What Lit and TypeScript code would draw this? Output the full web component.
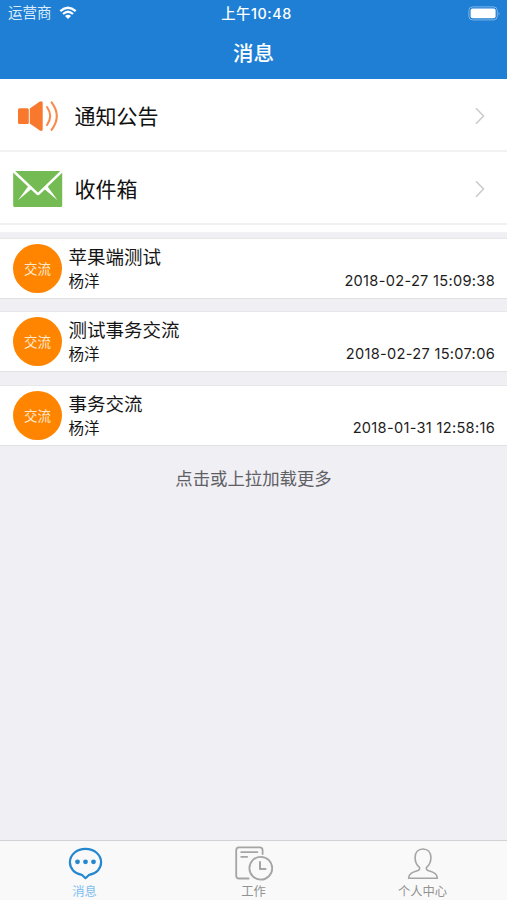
import { LitElement, html, css, svg } from "lit";
import { customElement, property } from "lit/decorators.js";

interface Topic {
  title: string;
  author: string;
  time: string;
}

const TOPICS: Topic[] = [
  { title: "苹果端测试", author: "杨洋", time: "2018-02-27 15:09:38" },
  { title: "测试事务交流", author: "杨洋", time: "2018-02-27 15:07:06" },
  { title: "事务交流", author: "杨洋", time: "2018-01-31 12:58:16" },
];

const speakerIcon = html`<svg width="50" height="50" viewBox="0 0 50 50">
  <g fill="#f8782e">
    <rect x="5" y="17.3" width="10.8" height="15.6" rx="1.5" />
    <path d="M16.8 17.6 26.5 10.8Q29.7 9 29.7 12V38Q29.7 41 26.5 39.2L16.8 32.6Z" />
  </g>
  <g fill="none" stroke="#f88a4c" stroke-width="2.1" stroke-linecap="round">
    <path d="M34 16Q40.4 25 34 34" />
    <path d="M38.6 11.4Q49 25 38.6 38.8" />
  </g>
</svg>`;

const mailIcon = html`<svg width="50" height="50" viewBox="0 0 50 50">
  <rect x="0.2" y="7" width="49" height="36" rx="1.5" fill="#73bb52" />
  <path d="M0 6.8 24 29.4Q25 30.3 26 29.4L49.5 6.8" fill="none" stroke="#fff" stroke-width="2.6" />
  <path d="M15.8 21.4 19 24.4 5 36.2Z M33.9 21.4 30.7 24.4 44.6 36.2Z" fill="#fff" />
</svg>`;

const wifiIcon = html`<svg width="18" height="14" viewBox="0 0 18 14">
  <g fill="none" stroke="#fff" stroke-width="2.3">
    <path d="M1.3 5.1Q9 -1.7 16.7 5.1" />
    <path d="M4 8Q9 3.6 14 8" />
  </g>
  <path d="M6 10.1Q9 7.5 12 10.1L9 13Z" fill="#fff" />
</svg>`;

const batteryIcon = html`<svg width="33" height="15" viewBox="0 0 33 15">
  <rect x="0.9" y="0.9" width="28.4" height="13" rx="3.6" fill="none" stroke="#7fb5e6" stroke-width="1" />
  <rect x="2.6" y="2.6" width="25" height="9.6" rx="2" fill="#fff" />
  <path d="M30.6 5.4Q32.4 7.4 30.6 9.4Z" fill="#7fb5e6" />
</svg>`;

const TAB_ICONS: Record<string, unknown> = {
  message: svg`
    <g fill="none" stroke="#2487cf" stroke-width="2.2" stroke-linejoin="round">
      <path d="M20.5 35.2 16.8 31.8C9.5 30.6 4.9 25.4 4.9 19.3 4.9 11.8 11.7 5.8 20.5 5.8S36.1 11.8 36.1 19.3C36.1 25.4 31.5 30.6 24.2 31.8Z" />
    </g>
    <g fill="#2487cf"><circle cx="12.5" cy="18.8" r="2.4" /><circle cx="20.5" cy="18.8" r="2.4" /><circle cx="28.5" cy="18.8" r="2.4" /></g>`,
  work: svg`
    <g fill="none" stroke="#a5a5a5" stroke-width="1.8" stroke-linecap="round" stroke-linejoin="round">
      <path d="M14.6 35.5H5Q2.2 35.5 2.2 32.7V7.2Q2.2 4.3 5 4.3H25.8Q28.6 4.3 28.6 7.2V11" />
      <path d="M7.2 9.2H23.4M7.2 13.8H13.2" />
      <circle cx="26.8" cy="25.2" r="11.4" />
      <path d="M26 19V26H31.5" stroke-width="2" />
    </g>`,
  person: svg`
    <path fill="none" stroke="#a5a5a5" stroke-width="1.6" stroke-linejoin="round"
      d="M20 6C15.2 6 12.1 9.4 12.1 14.6 12.1 19 13.7 22.2 16.2 24.1 17.2 25.3 16.6 26.9 15 27.5 9.8 29.2 5.8 30.2 5.6 35.2H34.4C34.2 30.2 30.2 29.2 25 27.5 23.4 26.9 22.8 25.3 23.8 24.1 26.3 22.2 27.9 19 27.9 14.6 27.9 9.4 24.8 6 20 6Z" />`,
};

@customElement("menu-row")
class MenuRow extends LitElement {
  @property() label = "";
  @property({ attribute: false }) icon: unknown;

  static styles = css`
    :host {
      display: flex;
      align-items: center;
      box-sizing: border-box;
      height: 73px;
      padding: 2px 21px 0 13px;
      border-bottom: 2px solid #f1f1f2;
      background: #fff;
    }
    .icon { display: flex; width: 50px; }
    .label { flex: 1; margin-left: 11.5px; padding-top: 3px; font-size: 21px; line-height: 30px; color: #111; }
  `;

  render() {
    return html`<span class="icon">${this.icon}</span>
      <span class="label">${this.label}</span>
      <svg width="12" height="20" viewBox="0 0 12 20">
        <path d="M2 2.2 9.5 10 2 17.8" fill="none" stroke="#cbcbcd" stroke-width="1.6" />
      </svg>`;
  }
}

@customElement("topic-card")
class TopicCard extends LitElement {
  @property({ attribute: false }) topic!: Topic;

  static styles = css`
    :host {
      display: flex;
      align-items: center;
      box-sizing: border-box;
      height: 61px;
      padding: 0 12px 0 13px;
      background: #fff;
      border-top: 1px solid #e7e7ea;
      border-bottom: 1px solid #e1e1e4;
    }
    .badge {
      display: flex;
      align-items: center;
      justify-content: center;
      box-sizing: border-box;
      width: 49px;
      height: 49px;
      padding-bottom: 1px;
      border-radius: 50%;
      background: #ff8400;
      color: #ffe9cf;
      font-size: 13.5px;
    }
    .body { flex: 1; margin-left: 6.5px; padding-top: 1px; color: #151515; }
    .title { font-size: 18.5px; line-height: 25px; }
    .meta { display: flex; justify-content: space-between; font-size: 15.5px; line-height: 23px; }
    .time { font-family: Inter, "Liberation Sans", sans-serif; font-size: 14.6px; letter-spacing: 0.3px; color: #1c1c1c; }
  `;

  render() {
    return html`<div class="badge">交流</div>
      <div class="body">
        <div class="title">${this.topic.title}</div>
        <div class="meta"><span>${this.topic.author}</span><span class="time">${this.topic.time}</span></div>
      </div>`;
  }
}

@customElement("tab-item")
class TabItem extends LitElement {
  @property() label = "";
  @property() icon = "message";
  @property({ type: Boolean, reflect: true }) active = false;

  static styles = css`
    :host {
      flex: 1;
      display: flex;
      flex-direction: column;
      align-items: center;
      padding-top: 2px;
      color: #929292;
      font-size: 12.3px;
      line-height: 17px;
    }
    :host([active]) { color: #80bdf0; }
    svg { flex: none; }
  `;

  render() {
    return html`<svg width="40" height="40" viewBox="0 0 40 40">${TAB_ICONS[this.icon]}</svg>
      <span>${this.label}</span>`;
  }
}

@customElement("app-root")
class AppRoot extends LitElement {
  static styles = css`
    :host {
      display: flex;
      flex-direction: column;
      height: 100vh;
      overflow: hidden;
      background: #efeff4;
      font-family: Inter, "Noto Sans CJK SC", sans-serif;
    }
    header { height: 79px; background: #1e7fd5; color: #fff; }
    .status {
      display: grid;
      grid-template-columns: 1fr auto 1fr;
      align-items: center;
      height: 26px;
      padding: 0 6px 0 8px;
      font-size: 14.5px;
    }
    .carrier { display: flex; align-items: center; gap: 7px; line-height: 20px; color: #dcecfa; }
    .clock { padding: 1px 0 0 4px; font-weight: 500; font-size: 14.3px; line-height: 18px; letter-spacing: 0.6px; }
    .battery { display: flex; justify-content: flex-end; }
    h1 { margin: 0; font-size: 20.5px; font-weight: 500; line-height: 55px; text-align: center; }
    .menu { height: 154px; background: #fff; border-bottom: 1px solid #f1f1f3; box-sizing: border-box; }
    .topics { display: flex; flex-direction: column; gap: 12.4px; padding-top: 5px; }
    .more { margin-top: 20.5px; text-align: center; font-size: 17.4px; line-height: 26px; color: #606064; }
    nav {
      display: flex;
      height: 60px;
      box-sizing: border-box;
      margin-top: auto;
      border-top: 1px solid #d2d2d6;
      background: #f9f9f9;
    }
  `;

  render() {
    return html`
      <header>
        <div class="status">
          <span class="carrier">运营商 ${wifiIcon}</span>
          <span class="clock">上午10:48</span>
          <span class="battery">${batteryIcon}</span>
        </div>
        <h1>消息</h1>
      </header>
      <section class="menu">
        <menu-row label="通知公告" .icon=${speakerIcon}></menu-row>
        <menu-row label="收件箱" .icon=${mailIcon}></menu-row>
      </section>
      <section class="topics">${TOPICS.map((t) => html`<topic-card .topic=${t}></topic-card>`)}</section>
      <div class="more">点击或上拉加载更多</div>
      <nav>
        <tab-item label="消息" icon="message" active></tab-item>
        <tab-item label="工作" icon="work"></tab-item>
        <tab-item label="个人中心" icon="person"></tab-item>
      </nav>
    `;
  }
}
